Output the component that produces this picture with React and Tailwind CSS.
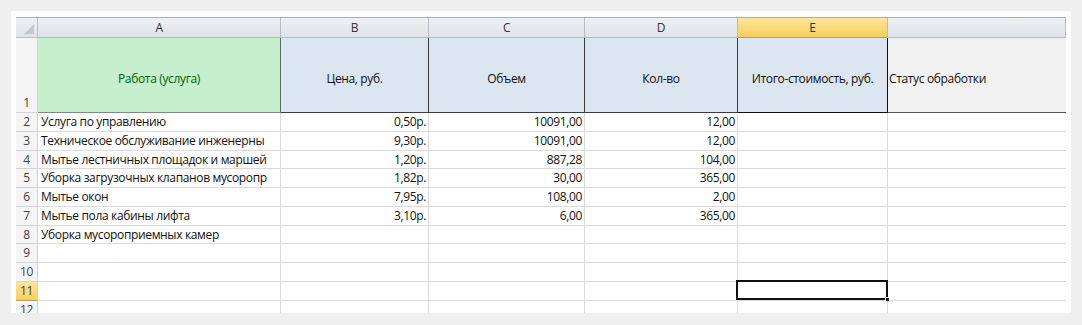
import React from 'react';

const cols = [
  { key: 'A', w: 'w-[243px]' },
  { key: 'B', w: 'w-[148px]' },
  { key: 'C', w: 'w-[156px]' },
  { key: 'D', w: 'w-[153px]' },
  { key: 'E', w: 'w-[150px]' },
  { key: '', w: 'w-[178px]' },
];

// text in column A is shown as Excel clips it at the cell edge
const rows = [
  ['Услуга по управлению', '0,50р.', '10091,00', '12,00'],
  ['Техническое обслуживание инженерны', '9,30р.', '10091,00', '12,00'],
  ['Мытье лестничных площадок и маршей', '1,20р.', '887,28', '104,00'],
  ['Уборка загрузочных клапанов мусоропр', '1,82р.', '30,00', '365,00'],
  ['Мытье окон', '7,95р.', '108,00', '2,00'],
  ['Мытье пола кабины лифта', '3,10р.', '6,00', '365,00'],
  ['Уборка мусороприемных камер', '', '', ''],
  ['', '', '', ''],
  ['', '', '', ''],
  ['', '', '', ''],
  ['', '', '', ''],
];

function App() {
  return (
    <div className="h-[325px] w-[1082px] bg-[#efefef] p-[11px] font-['Open_Sans','Liberation_Sans',sans-serif] text-[12px] tracking-[-0.35px] text-[#111]">
      <div className="h-[302px] w-[1060px] overflow-hidden bg-white px-[5px] pt-[6px]">
        {/* column letters */}
        <div className="flex h-[21px] border-t border-[#a7adb5] bg-gradient-to-b from-[#eef0f3] to-[#dfe2e7]">
          <div className="relative w-[22px] border-r border-b border-[#b6bcc5]">
            <div className="absolute right-[3px] bottom-[3px] h-0 w-0 border-b-[10px] border-l-[10px] border-b-[#c5c9cf] border-l-transparent" />
          </div>
          {cols.map((c) => (
            <div
              key={c.key || 'F'}
              className={`${c.w} flex items-center justify-center border-r border-b border-[#b6bcc5] text-[#333] ${
                c.key === 'E' ? 'bg-gradient-to-b from-[#fbe69a] to-[#f7cf5b] border-b-[#c59b3c]' : ''
              }`}
            >
              {c.key}
            </div>
          ))}
        </div>

        {/* row 1: headers */}
        <div className="flex h-[75px]">
          <div className="flex w-[22px] items-end justify-center border-r border-b border-[#cfd3d8] bg-[#f5f5f5] text-[#444]">1</div>
          <div className="flex w-[243px] items-center justify-center border-r border-b border-r-[#5a6a5c] border-b-[#7e8c80] bg-[#c6efce] pt-[8px] text-[#006100]">
            Работа (услуга)
          </div>
          <div className="flex w-[148px] items-center justify-center border-r border-b border-[#3c3c3c] bg-[#dce6f1] pt-[8px]">Цена, руб.</div>
          <div className="flex w-[156px] items-center justify-center border-r border-b border-[#3c3c3c] bg-[#dce6f1] pt-[8px]">Объем</div>
          <div className="flex w-[153px] items-center justify-center border-r border-b border-[#3c3c3c] bg-[#dce6f1] pt-[8px]">Кол-во</div>
          <div className="flex w-[150px] items-center justify-center border-r border-b border-[#111] bg-[#dce6f1] pt-[8px]">Итого-стоимость, руб.</div>
          <div className="flex w-[178px] items-center border-b border-[#555] bg-[#f1f1f1] pt-[8px] pl-[1px]">Статус обработки</div>
        </div>

        {/* data rows */}
        {rows.map((r, i) => {
          const n = i + 2;
          const sel = n === 11;
          return (
            <div key={n} className="flex h-[18.75px] leading-[17.75px]">
              <div
                className={`w-[22px] border-r border-b border-[#cfd3d8] text-center text-[#444] ${
                  sel ? 'bg-gradient-to-b from-[#fbe69a] to-[#f7cf5b] border-b-[#c59b3c]' : 'bg-[#f5f5f5]'
                }`}
              >
                {n}
              </div>
              <div className="w-[243px] overflow-hidden whitespace-nowrap border-r border-b border-[#dadada] pl-[3px]">{r[0]}</div>
              <div className="w-[148px] border-r border-b border-[#dadada] pr-[2px] text-right">{r[1]}</div>
              <div className="w-[156px] border-r border-b border-[#dadada] pr-[2px] text-right">{r[2]}</div>
              <div className="w-[153px] border-r border-b border-[#dadada] pr-[2px] text-right">{r[3]}</div>
              <div className="relative w-[150px] border-r border-b border-[#dadada]">
                {sel && (
                  <div className="absolute -top-[2px] -left-[2px] h-[20px] w-[152px] border-2 border-[#111]">
                    <div className="absolute -right-[4px] -bottom-[4px] h-[5px] w-[5px] border border-white bg-[#111]" />
                  </div>
                )}
              </div>
              <div className="w-[178px] border-b border-[#dadada]" />
            </div>
          );
        })}
        <div className="flex h-[18px] leading-[17px]">
          <div className="w-[22px] border-r border-[#cfd3d8] bg-[#f5f5f5] text-center text-[#444]">12</div>
          <div className="w-[243px] border-r border-[#dadada]" />
          <div className="w-[148px] border-r border-[#dadada]" />
          <div className="w-[156px] border-r border-[#dadada]" />
          <div className="w-[153px] border-r border-[#dadada]" />
          <div className="w-[150px] border-r border-[#dadada]" />
          <div className="w-[178px]" />
        </div>
      </div>
    </div>
  );
}

export default App;
